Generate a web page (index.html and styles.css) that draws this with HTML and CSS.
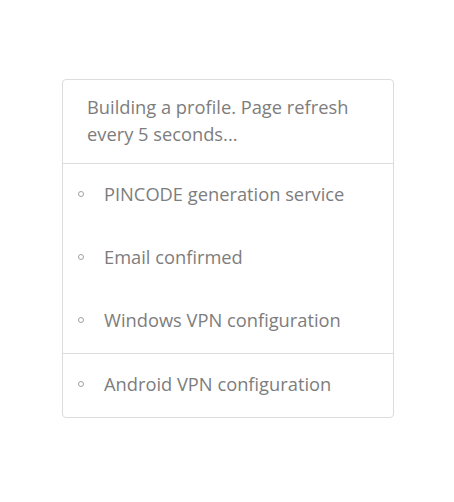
FILE: index.html
```html
<!DOCTYPE html>
<html>
<head>
<meta charset="utf-8">
<link rel="stylesheet" href="styles.css">
</head>
<body>
<div class="card">
  <div class="card-header">Building a profile. Page refresh every 5 seconds...</div>
  <ul class="steps">
    <li>PINCODE generation service</li>
    <li>Email confirmed</li>
    <li>Windows VPN configuration</li>
  </ul>
  <ul class="steps">
    <li>Android VPN configuration</li>
  </ul>
</div>
</body>
</html>
```
FILE: styles.css
```css
html, body {
  margin: 0;
  padding: 0;
  background: #fff;
}
body {
  font-family: "Open Sans", "DejaVu Sans", sans-serif;
  color: #7d7d7d;
}
.card {
  margin: 79px 0 0 62px;
  width: 330px;
  border: 1px solid #dcdcdc;
  border-radius: 4px;
}
.card-header {
  font-size: 18.3px;
  line-height: 27px;
  padding: 13px 20px 16px 24px;
  border-bottom: 1px solid #dcdcdc;
}
.steps {
  list-style: none;
  margin: 0;
  padding: 0;
}
.steps + .steps {
  border-top: 1px solid #dcdcdc;
}
.steps li {
  display: flex;
  align-items: center;
  font-size: 18.3px;
  line-height: 27px;
  padding: 16px 0 20px 0;
}
.steps li::before {
  content: "";
  width: 4px;
  height: 4px;
  border: 1px solid #a0a0a0;
  border-radius: 50%;
  margin: 0 20px 0 15px;
  flex: none;
}
```
